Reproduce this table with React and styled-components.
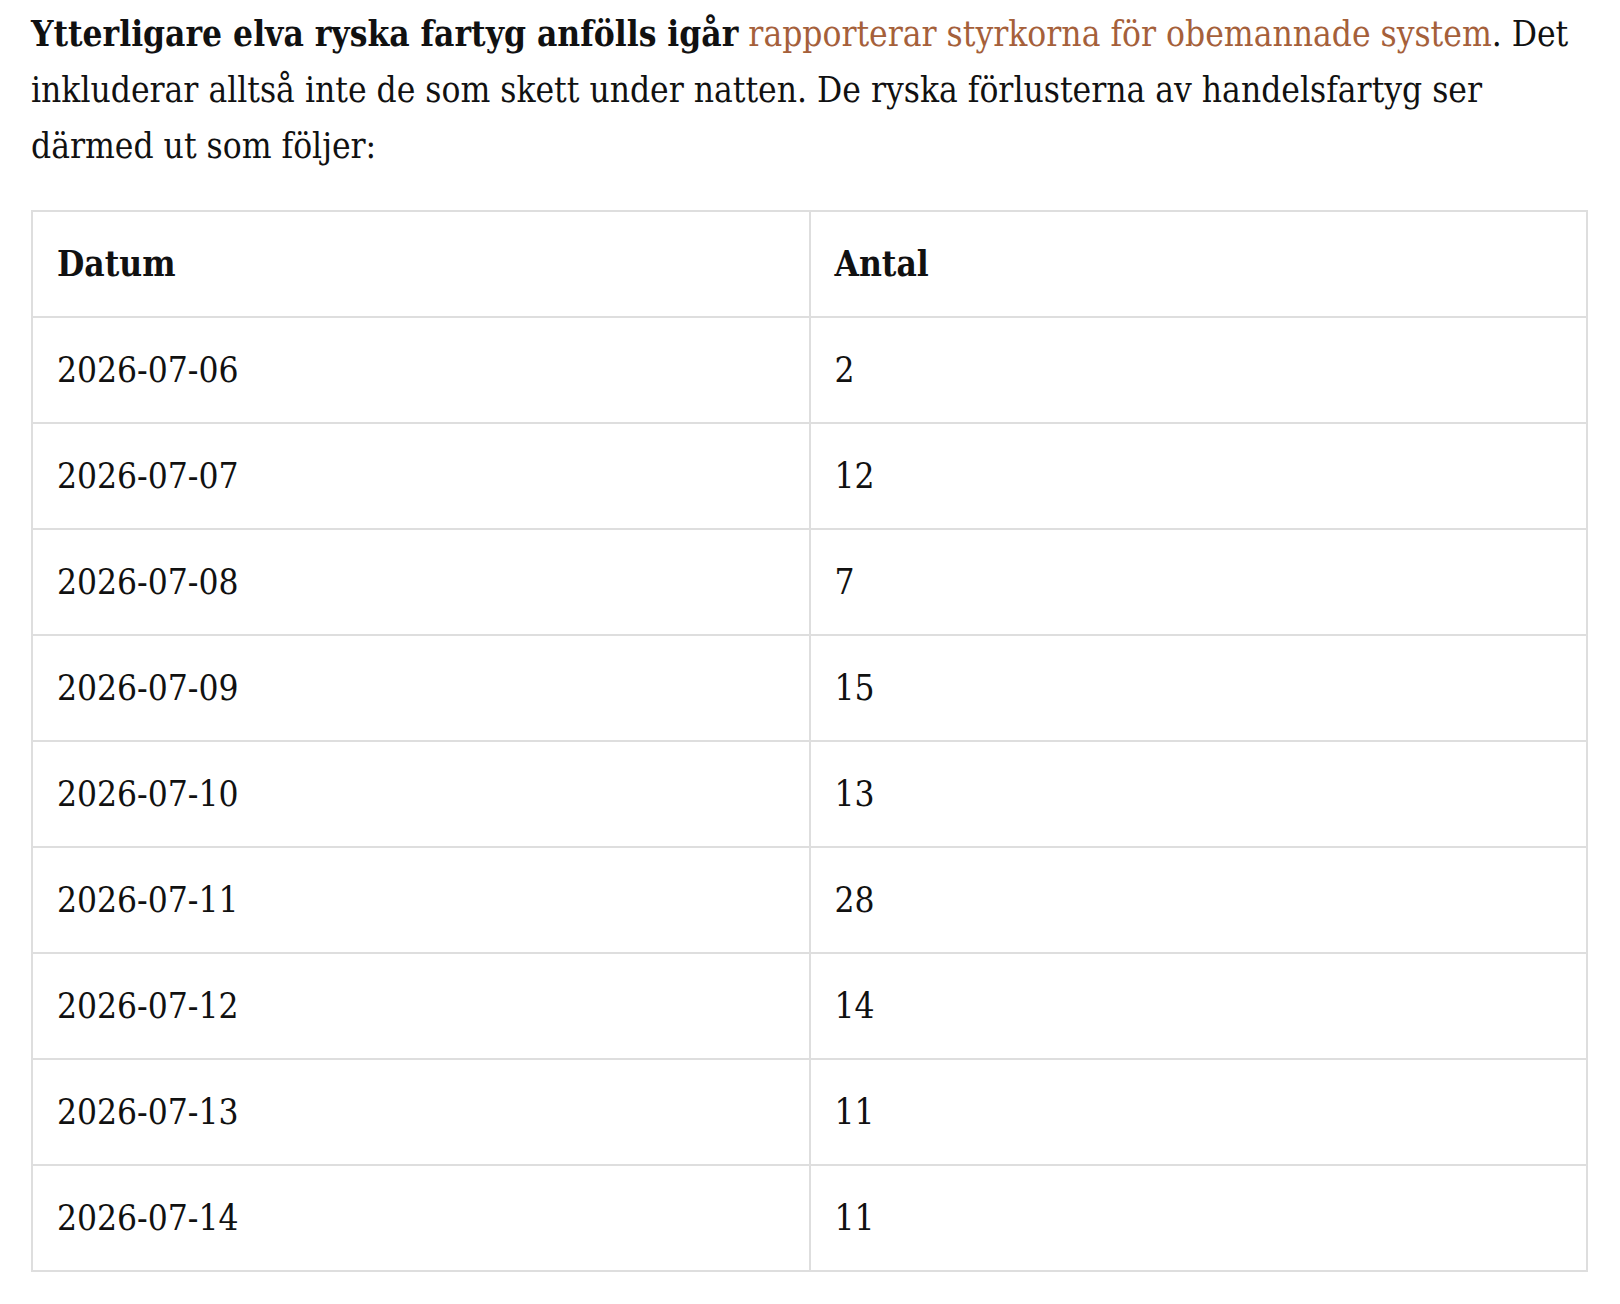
import React from 'react'
import styled, { createGlobalStyle } from 'styled-components'

const rows = [
  ['2026-07-06', '2'],
  ['2026-07-07', '12'],
  ['2026-07-08', '7'],
  ['2026-07-09', '15'],
  ['2026-07-10', '13'],
  ['2026-07-11', '28'],
  ['2026-07-12', '14'],
  ['2026-07-13', '11'],
  ['2026-07-14', '11'],
]

const GlobalStyle = createGlobalStyle`
  html, body {
    margin: 0;
    background: #fff;
  }
`

const App = () => {
  return (
    <Article>
      <GlobalStyle />
      <Text>
        <strong>Ytterligare elva ryska fartyg anfölls igår</strong>{' '}
        <Link href="#">rapporterar styrkorna för obemannade system</Link>. Det
        inkluderar alltså inte de som skett under natten. De ryska förlusterna
        av handelsfartyg ser därmed ut som följer:
      </Text>
      <Table>
        <thead>
          <tr>
            <Head>Datum</Head>
            <Head>Antal</Head>
          </tr>
        </thead>
        <tbody>
          {rows.map(([date, count]) => (
            <tr key={date}>
              <Cell>{date}</Cell>
              <Cell>{count}</Cell>
            </tr>
          ))}
        </tbody>
      </Table>
    </Article>
  )
}

const Article = styled.div`
  padding: 6px 32px 40px 31px;
  font-family: "DejaVu Serif Condensed", "DejaVu Serif", serif;
  font-stretch: condensed;
  font-size: 35px;
  line-height: 56px;
  color: #111;
`

const Text = styled.p`
  margin: 0 0 36px;
  strong {
    font-weight: 700;
  }
`

const Link = styled.a`
  color: #a5603a;
  text-decoration: none;
`

const Table = styled.table`
  width: 100%;
  border-collapse: collapse;
  table-layout: fixed;
  border: 2px solid #dedede;
`

const Head = styled.th`
  text-align: left;
  font-weight: 700;
  padding: 24px 24px;
  border: 2px solid #dedede;
`

const Cell = styled.td`
  padding: 24px 24px;
  border: 2px solid #dedede;
`

export default App
